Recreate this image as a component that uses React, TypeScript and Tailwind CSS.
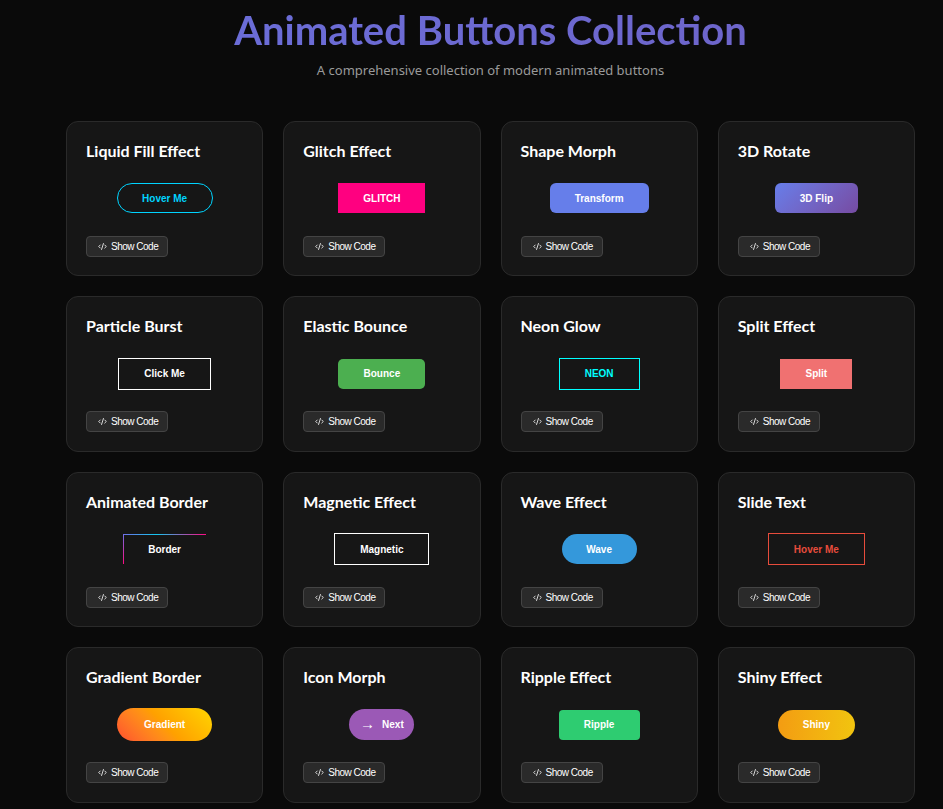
import { CodeXml } from 'lucide-react'
import { ReactNode } from 'react'

interface Demo {
    title: string
    button: ReactNode
}

const label = "font-['Liberation_Sans',Arial,sans-serif] text-[10px] font-bold"

const demos: Demo[] = [
    {
        title: 'Liquid Fill Effect',
        button: (
            <button className={`${label} w-[96px] h-[30px] rounded-full border border-[#00d4ff] text-[#00d4ff]`}>
                Hover Me
            </button>
        ),
    },
    {
        title: 'Glitch Effect',
        button: <button className={`${label} w-[87px] h-[30px] bg-[#ff0080] text-white`}>GLITCH</button>,
    },
    {
        title: 'Shape Morph',
        button: (
            <button className={`${label} w-[99px] h-[30px] rounded-[6px] bg-[#667eea] text-white`}>Transform</button>
        ),
    },
    {
        title: '3D Rotate',
        button: (
            <button
                className={`${label} w-[83px] h-[30px] rounded-[6px] bg-linear-135 from-[#667eea] to-[#764ba2] text-white`}
            >
                3D Flip
            </button>
        ),
    },
    {
        title: 'Particle Burst',
        button: <button className={`${label} w-[93px] h-[32px] border border-white text-white`}>Click Me</button>,
    },
    {
        title: 'Elastic Bounce',
        button: (
            <button className={`${label} w-[87px] h-[30px] rounded-[5px] bg-[#4caf50] text-white`}>Bounce</button>
        ),
    },
    {
        title: 'Neon Glow',
        button: (
            <button className={`${label} w-[81px] h-[32px] border border-[#00ffff] text-[#00ffff]`}>NEON</button>
        ),
    },
    {
        title: 'Split Effect',
        button: <button className={`${label} w-[72px] h-[30px] bg-[#f07171] text-white`}>Split</button>,
    },
    {
        title: 'Animated Border',
        button: (
            <button className={`${label} relative w-[83px] h-[30px] text-white`}>
                {/* running border: only the top and left edges are visible at rest */}
                <span className="absolute left-0 top-0 h-[1px] w-full bg-[linear-gradient(90deg,#6f6fe8,#12c8f0_40%,#ff0a84)]" />
                <span className="absolute left-0 top-0 h-full w-[1px] bg-[linear-gradient(180deg,#6f6fe8,#ff0a84)]" />
                Border
            </button>
        ),
    },
    {
        title: 'Magnetic Effect',
        button: <button className={`${label} w-[95px] h-[32px] border border-white text-white`}>Magnetic</button>,
    },
    {
        title: 'Wave Effect',
        button: <button className={`${label} w-[75px] h-[30px] rounded-full bg-[#3498db] text-white`}>Wave</button>,
    },
    {
        title: 'Slide Text',
        button: (
            <button className={`${label} w-[97px] h-[32px] border border-[#e74c3c] text-[#e74c3c]`}>Hover Me</button>
        ),
    },
    {
        title: 'Gradient Border',
        button: (
            <button
                className={`${label} w-[95px] h-[33px] rounded-full bg-linear-45 from-[#ff4d2e] via-[#ffa000] to-[#ffd500] text-white`}
            >
                Gradient
            </button>
        ),
    },
    {
        title: 'Icon Morph',
        button: (
            <button
                className={`${label} w-[65px] h-[31px] rounded-full bg-[#9b59b6] text-white flex items-center justify-center gap-[7px]`}
            >
                <span className="text-[15px] font-normal leading-none -mt-[2px]">→</span>
                Next
            </button>
        ),
    },
    {
        title: 'Ripple Effect',
        button: <button className={`${label} w-[81px] h-[30px] rounded-[4px] bg-[#2ecc71] text-white`}>Ripple</button>,
    },
    {
        title: 'Shiny Effect',
        button: (
            <button
                className={`${label} w-[77px] h-[30px] rounded-full bg-linear-to-r from-[#f39c12] to-[#f1c40f] text-white`}
            >
                Shiny
            </button>
        ),
    },
]

function Card({ demo }: { demo: Demo }) {
    return (
        <div className="rounded-[12px] border border-[#2a2a2a] bg-[#161616] px-[19px] pt-[18px] pb-[18.5px]">
            <h3 className="font-['Lato',sans-serif] text-[16px] font-bold leading-[22px] text-white">
                {demo.title}
            </h3>
            <div className="flex h-[73px] items-center justify-center">{demo.button}</div>
            <button className="mt-[1px] flex h-[21px] items-center gap-[4px] rounded-[4px] border border-[#444] bg-[#2a2a2a] pl-[11px] pr-[9px] font-['Liberation_Sans',Arial,sans-serif] text-[10px] tracking-[-0.5px] text-white">
                <CodeXml size={9} strokeWidth={2.2} />
                Show Code
            </button>
        </div>
    )
}

export default function App() {
    return (
        <div className="min-h-screen bg-[#0a0a0a] pb-[20px]">
            <div className="ml-[66px] w-[849px]">
                <header className="pt-[6px] text-center">
                    <h1 className="bg-linear-135 from-[#6a70dc] to-[#6e62c6] bg-clip-text font-['Lato',sans-serif] text-[40px] font-bold leading-[48px] text-transparent">
                        Animated Buttons Collection
                    </h1>
                    <p className="mt-[7px] font-['Noto_Sans',sans-serif] text-[13px] text-[#9a9a9a]">
                        A comprehensive collection of modern animated buttons
                    </p>
                </header>
                <div className="mt-[40px] grid grid-cols-4 gap-[20px]">
                    {demos.map((d, i) => (
                        <Card key={i} demo={d} />
                    ))}
                </div>
            </div>
        </div>
    )
}
